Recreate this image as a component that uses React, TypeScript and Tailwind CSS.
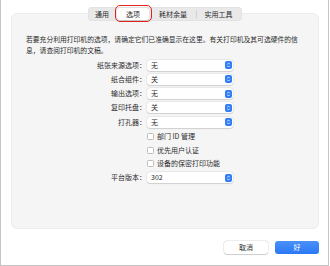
import React from "react";

const font = { fontFamily: '"Noto Sans CJK SC", "Noto Sans", sans-serif' };

function Stepper() {
  return (
    <div className="w-[7px] h-[8px] rounded-[2px] bg-[#2f7cf6] flex items-center justify-center">
      <svg width="5" height="6" viewBox="0 0 5 6">
        <path d="M1.2 2.3 L2.5 1 L3.8 2.3" stroke="white" strokeWidth="0.8" fill="none" />
        <path d="M1.2 3.7 L2.5 5 L3.8 3.7" stroke="white" strokeWidth="0.8" fill="none" />
      </svg>
    </div>
  );
}

function SelectRow({ label, value }: { label: string; value: string }) {
  return (
    <div className="flex items-center h-[14.25px]">
      <div className="w-[135px] text-right text-[7px] leading-none text-[#2b2b2b] pr-[1px]">{label}</div>
      <div className="w-[86px] h-[11px] bg-white rounded-[3px] shadow-[0_0_0_0.5px_rgba(0,0,0,0.08),0_0.5px_1px_rgba(0,0,0,0.12)] flex items-center justify-between pl-[4px] pr-[1.5px]">
        <span className="text-[7px] leading-none text-[#2b2b2b]">{value}</span>
        <Stepper />
      </div>
    </div>
  );
}

function CheckRow({ label }: { label: string }) {
  return (
    <div className="flex items-center h-[13.4px]">
      <div className="w-[135px]" />
      <div className="w-[7px] h-[7px] bg-white rounded-[1.5px] border border-[#bdbdbd]" />
      <span className="ml-[3px] text-[7px] leading-none text-[#2b2b2b]">{label}</span>
    </div>
  );
}

export default function App() {
  return (
    <div style={font} className="w-[329px] h-[266px] bg-white border-l border-r border-b border-[#c4c4c4] flex flex-col">
      <div className="pt-[7px] flex justify-center relative z-10">
        <div className="flex items-center h-[14px] bg-[#e9e9e9] rounded-[4px] px-[1px] shadow-[inset_0_0_0_0.5px_rgba(0,0,0,0.06)]">
          <div className="w-[27px] h-[12px] flex items-center justify-center text-[7px] leading-none text-[#2b2b2b]">通用</div>
          <div className="relative w-[35px] h-[12px] flex items-center justify-center">
            <div className="absolute -inset-x-[1px] -top-[3px] -bottom-[2px] border-[1.5px] border-[#e1251b] rounded-[5px]" />
            <div className="w-[32px] h-[12px] bg-white rounded-[3px] shadow-[0_0.5px_1px_rgba(0,0,0,0.15)] flex items-center justify-center text-[7px] leading-none text-[#2b2b2b]">选项</div>
          </div>
          <div className="w-[45px] h-[12px] flex items-center justify-center text-[7px] leading-none text-[#2b2b2b]">耗材余量</div>
          <div className="w-[1px] h-[8px] bg-[#cfcfcf]" />
          <div className="w-[44px] h-[12px] flex items-center justify-center text-[7px] leading-none text-[#2b2b2b]">实用工具</div>
        </div>
      </div>
      <div className="ml-[10px] -mt-[8px] w-[308px] h-[216px] bg-[#f5f5f5] rounded-[6px] border border-[#ececec] flex flex-col">
        <div className="pt-[20px] pl-[14px] pr-[16px] text-[6.8px] leading-[11px] text-[#2b2b2b]">
          若要充分利用打印机的选项，请确定它们已准确显示在这里。有关打印机及其可选硬件的信息，请查阅打印机的文稿。
        </div>
        <div className="mt-[2px] flex flex-col">
          <SelectRow label="纸张来源选项：" value="无" />
          <SelectRow label="纸合组件：" value="关" />
          <SelectRow label="输出选项：" value="无" />
          <SelectRow label="复印托盘：" value="关" />
          <SelectRow label="打孔器：" value="无" />
          <div className="h-[1px]" />
          <CheckRow label="部门 ID 管理" />
          <CheckRow label="优先用户认证" />
          <CheckRow label="设备的保密打印功能" />
          <SelectRow label="平台版本：" value="302" />
        </div>
      </div>
      <div className="flex justify-end gap-[7px] mt-[12px] pr-[9px]">
        <div className="w-[44px] h-[13px] bg-white rounded-[3px] shadow-[0_0_0_0.5px_rgba(0,0,0,0.12),0_0.5px_1px_rgba(0,0,0,0.15)] flex items-center justify-center text-[7px] leading-none text-[#2b2b2b]">取消</div>
        <div className="w-[44px] h-[13px] bg-gradient-to-b from-[#4a90f8] to-[#2a78f5] rounded-[3px] flex items-center justify-center text-[7px] leading-none text-white">好</div>
      </div>
    </div>
  );
}
